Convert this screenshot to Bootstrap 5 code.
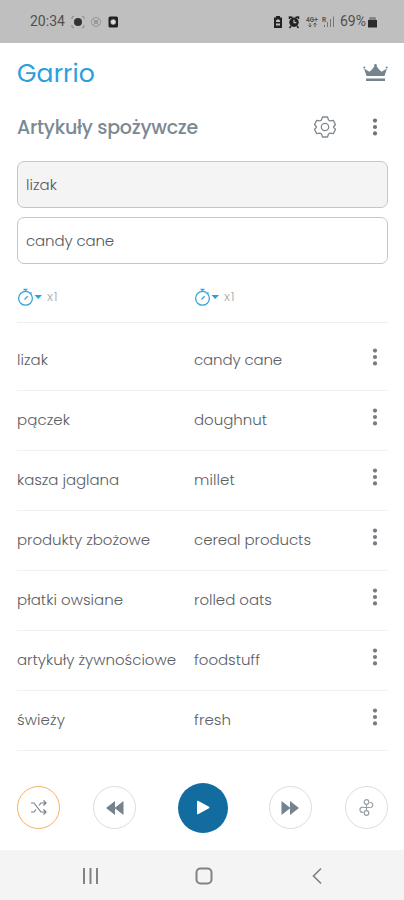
<!DOCTYPE html>
<html lang="pl">
<head>
<meta charset="utf-8">
<meta name="viewport" content="width=device-width, initial-scale=1">
<title>Garrio</title>
<link href="https://cdn.jsdelivr.net/npm/bootstrap@5.3.0/dist/css/bootstrap.min.css" rel="stylesheet">
<style>
body{font-family:Poppins,Inter,"Liberation Sans",sans-serif;font-size:15px;font-weight:300;color:#5a5e65;background:#fff}
.screen{width:404px;height:900px;overflow:hidden}
.screen>*{flex-shrink:0}
svg{display:block;flex:none;overflow:visible}
.status{height:43px;background:#bfbfbf;color:#505050;font-family:Roboto,sans-serif;font-size:14px;font-weight:400;padding:0 27px 0 30px}
.brand{height:59px;padding:0 16px 0 17px}
.brand-name{font-size:25px;font-weight:400;color:#2b9fdb;line-height:1;padding-top:1px}
.heading{height:50px;padding:0 25px 1px 17px}
.heading h1{font-size:19px;font-weight:500;color:#7b8993;line-height:1;padding-top:1px}
.gutter{padding-left:17px;padding-right:16px}
.word{height:47px;border:1.5px solid #c6c6c6;border-radius:7px;padding:0 8px 1px;background:#fff;line-height:1;color:#54585f}
.word.prompt{background:#f4f4f4}
.words{padding-top:9px;gap:9px}
.speed{height:50px;border-bottom:1px solid #efefef;color:#aaa;font-size:13px;letter-spacing:.8px;margin-top:9px;padding-bottom:1px}
.entry{height:60px;border-bottom:1px solid #f1f1f1;white-space:nowrap;line-height:20px;padding-bottom:1px}
.entry.first{height:68px;padding-top:8px}
.source{width:177px}
.more{color:#757c82;margin-right:10px;padding-bottom:6px}
.player{height:99px;padding-top:14px}
.ctl{width:43px;height:43px;border:1px solid #dcdcdc;color:#74838e}
.ctl.on{border:1.5px solid #f5b060}
.ctl.play{width:50px;height:50px;background:#126ca0;border:0;color:#fff;margin:0 8px}
.sysnav{height:50px;background:#f4f4f4;color:#828282}
</style>
</head>
<body>
<svg width="0" height="0" class="position-absolute">
<symbol id="dots" viewBox="0 0 6 20"><g fill="currentColor"><circle cx="3" cy="3.600" r="2.100"/><circle cx="3" cy="10" r="2.100"/><circle cx="3" cy="16.400" r="2.100"/></g></symbol>
<symbol id="watch" viewBox="0 0 26 18"><g fill="none" stroke="#3aa5dc" stroke-width="1.300"><circle cx="8.500" cy="10.300" r="6.900"/><path d="M8.500 1v3M6.500 1.500h4M7.500 11.500l3.200-3.200M13.500 4.500l1 1"/></g><path d="M17.500 7h7.500L21.200 11z" fill="#2b9fdb"/></symbol>
</svg>
<main class="screen d-flex flex-column">
<header class="status d-flex align-items-center justify-content-between">
<div class="d-flex align-items-center"><span>20:34</span>
<svg width="48" height="14" viewBox="0 0 48 14" style="margin-left:6px"><circle cx="7" cy="7" r="4" fill="#333"/><path d="M1 4V2l2-1M11 1l2 1v2M1 10v2l2 1M11 13l2-1v-2" fill="none" stroke="#888"/><g fill="none" stroke="#999"><circle cx="25" cy="7" r="4.600"/><circle cx="25" cy="7" r="1.800"/><path d="M22 4l6 6M28 4l-6 6"/></g><rect x="37.500" y="1.500" width="9.500" height="11" rx="1.500" fill="#222"/><circle cx="42.200" cy="7" r="2.700" fill="#bfbfbf"/><path d="M42.200 5v4M40.200 7h4" stroke="#eee"/></svg></div>
<div class="d-flex align-items-center">
<svg width="64" height="14" viewBox="0 0 64 14" style="margin-right:3px"><path d="M3 1h4v1.500h2V13H1V2.500h2z" fill="#222"/><path d="M3 5.500l2-1.500 2 1.500V7H3zM3 8.500h4v2H3z" fill="#bfbfbf"/><circle cx="21" cy="7.300" r="4.700" fill="#222"/><path d="M16.500 4V2l3 .2M22.500 2.200l3-.2v2M18 11l-1.500 2M24 11l1.500 2" fill="none" stroke="#222" stroke-width="1.500"/><path d="M21 4.700v2.900h2.300" fill="none" stroke="#bfbfbf" stroke-width="1.200"/><text x="33" y="6.500" font-size="6.500" font-weight="700" fill="#555">4G+</text><path d="M37 8v4M35.500 10.500L37 12l1.500-1.500M42 12V8M40.500 9.500L42 8l1.500 1.500" fill="none" stroke="#555"/><text x="49" y="6.500" font-size="6.500" font-weight="700" fill="#555">R</text><path d="M51.500 12v-2M54.500 12V7M57.500 12V4M60.500 12V1.500" stroke="#777"/></svg>
<span>69%</span>
<svg width="9" height="12" viewBox="0 0 9 12" style="margin-left:2px"><path d="M1 4V2l1-1h5l1 1v2z" fill="#858585"/><path d="M0 4h9v7.500H0z" fill="#2b2b2b"/></svg></div>
</header>
<div class="brand d-flex align-items-center justify-content-between"><span class="brand-name"><span class="t" data-w="78">Garrio</span></span>
<svg width="25" height="18" viewBox="0 0 25 18" fill="#748590"><path d="M3.500 12L1 4.500l5.500 3.300L9 5.500 12.500.8 16 5.500l2.500 2.300L24 4.500 21.500 12z"/><circle cx="1.300" cy="3.500" r="1"/><circle cx="12.500" cy="1.300" r="1.300"/><circle cx="23.700" cy="3.500" r="1"/><path d="M3 14.500h19V17H3z"/></svg></div>
<div class="heading d-flex align-items-center"><h1 class="m-0 me-auto"><span class="t" data-w="181">Artykuły spożywcze</span></h1>
<svg width="22" height="22" viewBox="0 0 22 22" fill="none" stroke="#81898f" stroke-width="1.300" stroke-linejoin="round" style="margin-right:35px"><path d="M8.500 1h5l1 3 1.600.9 3.200-.5L21.500 8.500l-2 2.500 2 2.500-2.200 4.100-3.200-.5-1.600.9-1 3h-5l-1-3-1.600-.9-3.200.5L.5 13.500l2-2.500-2-2.500 2.200-4.100 3.200.5L7.500 4z"/><circle cx="11" cy="11" r="3.700"/></svg>
<svg width="8" height="20" class="text-secondary"><use href="#dots"/></svg></div>
<section class="words gutter d-flex flex-column">
<div class="word prompt d-flex align-items-center"><span class="t" data-w="31">lizak</span></div>
<div class="word d-flex align-items-center"><span class="t" data-w="88">candy cane</span></div>
</section>
<section class="gutter">
<div class="speed d-flex align-items-center"><div class="source d-flex align-items-center"><svg width="26" height="18"><use href="#watch"/></svg><span class="ms-1">x1</span></div><div class="d-flex align-items-center"><svg width="26" height="18"><use href="#watch"/></svg><span class="ms-1">x1</span></div></div>
<div class="entry first d-flex align-items-center"><div class="source"><span class="t" data-w="31">lizak</span></div><div class="me-auto"><span class="t" data-w="88">candy cane</span></div><svg class="more" width="6" height="26"><use href="#dots" width="6" height="20"/></svg></div>
<div class="entry d-flex align-items-center"><div class="source"><span class="t" data-w="53">pączek</span></div><div class="me-auto"><span class="t" data-w="73">doughnut</span></div><svg class="more" width="6" height="26"><use href="#dots" width="6" height="20"/></svg></div>
<div class="entry d-flex align-items-center"><div class="source"><span class="t" data-w="102">kasza jaglana</span></div><div class="me-auto"><span class="t" data-w="41">millet</span></div><svg class="more" width="6" height="26"><use href="#dots" width="6" height="20"/></svg></div>
<div class="entry d-flex align-items-center"><div class="source"><span class="t" data-w="133">produkty zbożowe</span></div><div class="me-auto"><span class="t" data-w="117">cereal products</span></div><svg class="more" width="6" height="26"><use href="#dots" width="6" height="20"/></svg></div>
<div class="entry d-flex align-items-center"><div class="source"><span class="t" data-w="106">płatki owsiane</span></div><div class="me-auto"><span class="t" data-w="78">rolled oats</span></div><svg class="more" width="6" height="26"><use href="#dots" width="6" height="20"/></svg></div>
<div class="entry d-flex align-items-center"><div class="source"><span class="t" data-w="159">artykuły żywnościowe</span></div><div class="me-auto"><span class="t" data-w="66">foodstuff</span></div><svg class="more" width="6" height="26"><use href="#dots" width="6" height="20"/></svg></div>
<div class="entry d-flex align-items-center"><div class="source"><span class="t" data-w="48">świeży</span></div><div class="me-auto"><span class="t" data-w="37">fresh</span></div><svg class="more" width="6" height="26"><use href="#dots" width="6" height="20"/></svg></div>
</section>
<div class="player gutter d-flex align-items-center justify-content-between mt-auto">
<div class="ctl on rounded-circle d-flex align-items-center justify-content-center"><svg width="17" height="15" viewBox="0 0 17 15" fill="none" stroke="currentColor" stroke-width="1.200"><path d="M1 3h3l7 9h5M1 12h3l2-2.500M9 5.500L11 3h5M13.500.5L16 3l-2.500 2.500M13.500 9.500L16 12l-2.500 2.500"/></svg></div>
<div class="ctl rounded-circle d-flex align-items-center justify-content-center"><svg width="18" height="14" viewBox="0 0 18 14" fill="currentColor"><path d="M0 7L9 0v14zM8.500 7L17.500 0v14z"/></svg></div>
<div class="ctl play rounded-circle d-flex align-items-center justify-content-center"><svg width="14" height="15" viewBox="0 0 14 15" fill="currentColor"><path d="M1 1.500Q1 .3 2 .8l11 6q1 .7 0 1.400l-11 6q-1 .5-1-.7z"/></svg></div>
<div class="ctl rounded-circle d-flex align-items-center justify-content-center"><svg width="18" height="14" viewBox="0 0 18 14" fill="currentColor"><path d="M.5 0l9 7-9 7zM9 0l9 7-9 7z"/></svg></div>
<div class="ctl rounded-circle d-flex align-items-center justify-content-center"><svg width="17" height="17" viewBox="0 0 17 17" fill="none" stroke="#999fa3" stroke-width="1.200"><circle cx="8.500" cy="3" r="2.300"/><path d="M8.500 5.300v6.200M8.500 8.500h4"/><path d="M12 3.500a2.500 2.500 0 1 1 .5 5M5.500 13a2.500 2.500 0 1 1 0-4.500h3"/><circle cx="8.500" cy="14" r="2.300"/></svg></div>
</div>
<nav class="sysnav d-flex align-items-center justify-content-center">
<svg width="240" height="18" viewBox="0 0 240 18" fill="none" stroke="currentColor" stroke-width="2"><path d="M2 2v16M8.500 2v16M15 2v16"/><rect x="114.500" y="2.500" width="15" height="15" rx="4"/><path d="M239 2.500l-7.500 7.500 7.500 7.500" stroke-width="1.700"/></svg>
</nav>
</main>
<script>
document.querySelectorAll('.t').forEach(function (el) {
  var gap = (parseFloat(el.dataset.w) - el.getBoundingClientRect().width) / el.textContent.length;
  el.style.letterSpacing = gap.toFixed(3) + 'px';
});
</script>
</body>
</html>
